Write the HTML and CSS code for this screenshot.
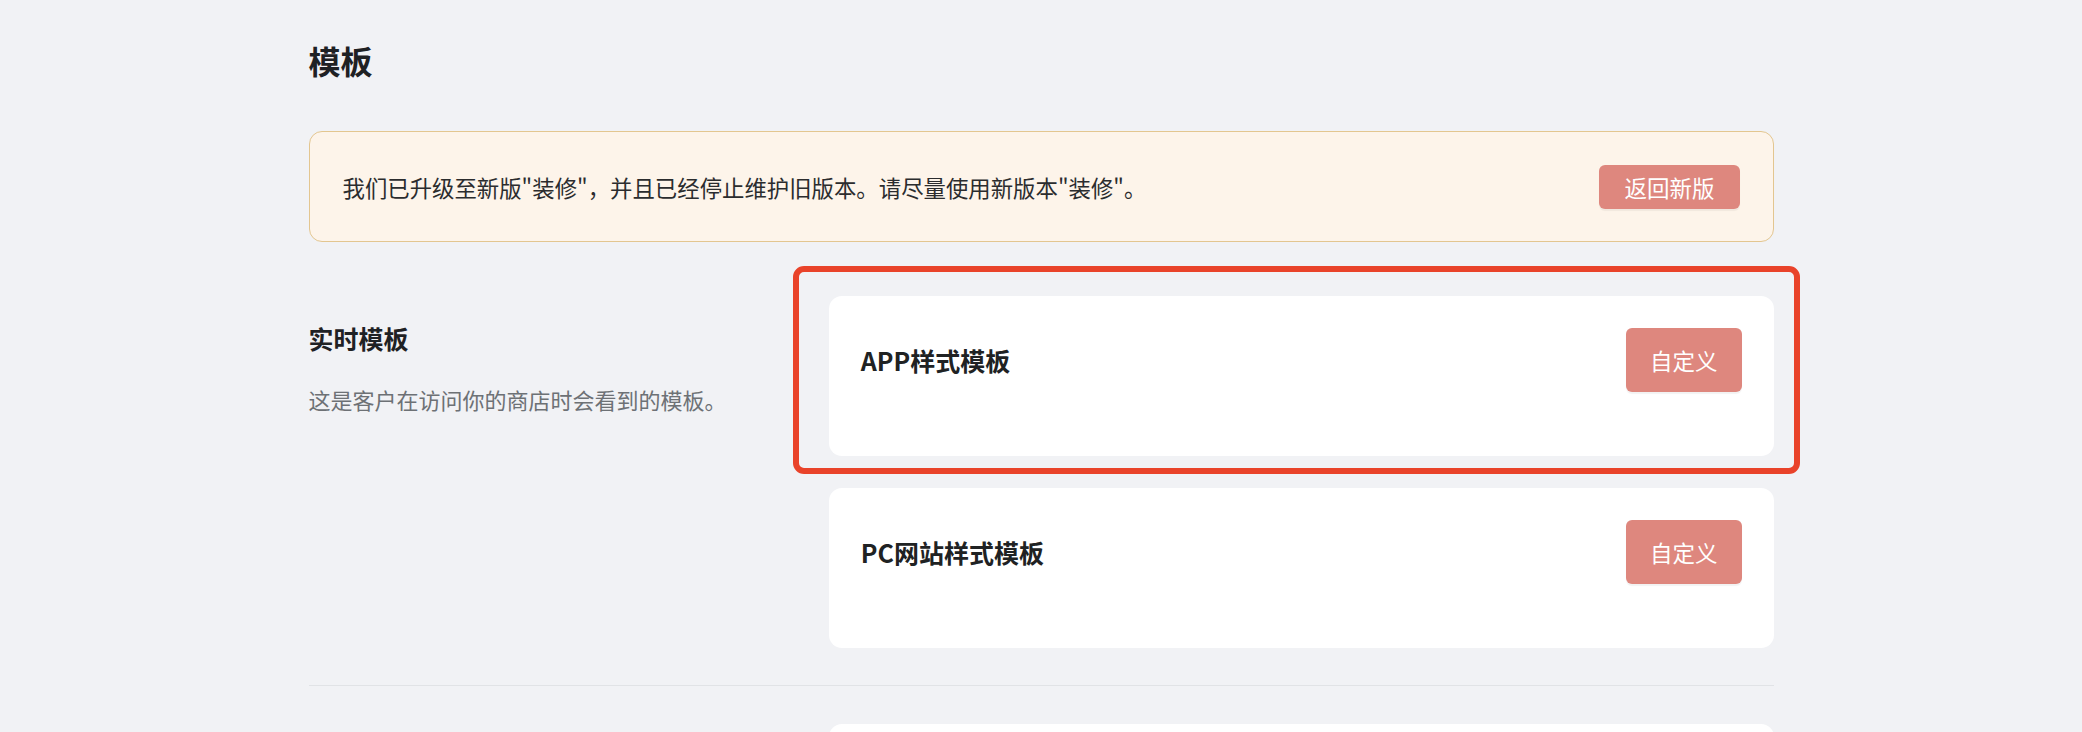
FILE: index.html
```html
<!DOCTYPE html>
<html lang="zh-CN">
<head>
<meta charset="utf-8">
<title>模板</title>
<link rel="stylesheet" href="styles.css">
</head>
<body>
<main class="page">
  <h1 class="page-title">模板</h1>

  <div class="notice">
    <p class="notice-text">我们已升级至新版"装修"，并且已经停止维护旧版本。请尽量使用新版本"装修"。</p>
    <button class="btn" type="button">返回新版</button>
  </div>

  <section class="layout-section">
    <div class="section-info">
      <h2 class="section-title">实时模板</h2>
      <p class="section-desc">这是客户在访问你的商店时会看到的模板。</p>
    </div>
    <div class="section-cards">
      <div class="card-wrap">
        <div class="card">
          <div class="card-header">
            <h3 class="card-title">APP样式模板</h3>
            <button class="btn btn-tall" type="button">自定义</button>
          </div>
        </div>
        <span class="highlight-ring"></span>
      </div>
      <div class="card">
        <div class="card-header">
          <h3 class="card-title">PC网站样式模板</h3>
          <button class="btn btn-tall" type="button">自定义</button>
        </div>
      </div>
    </div>
  </section>

  <section class="layout-section">
    <div class="section-info"></div>
    <div class="section-cards">
      <div class="card card-empty"></div>
    </div>
  </section>
</main>
</body>
</html>
```

FILE: styles.css
```css
* {
  box-sizing: border-box;
}

html, body {
  margin: 0;
  padding: 0;
}

body {
  background: #f1f2f5;
  color: #202223;
  font-family: "Noto Sans CJK SC", "Noto Sans", "Liberation Sans", sans-serif;
  overflow: hidden;
}

.page {
  width: 1465px;
  margin: 0 auto;
  padding-top: 40px;
}

.page-title {
  margin: 0 0 51px;
  font-size: 32px;
  line-height: 40px;
  font-weight: 700;
  color: #1f2124;
}

/* upgrade notice banner */
.notice {
  display: flex;
  align-items: center;
  justify-content: space-between;
  height: 111px;
  padding: 0 33px;
  background: #fdf4ea;
  border: 1px solid #e3c690;
  border-radius: 13px;
}

.notice-text {
  margin: 0;
  font-size: 22.4px;
  line-height: 32px;
  color: #2b2c2e;
}

.btn {
  font-family: inherit;
  font-size: 22.5px;
  line-height: 30px;
  color: #ffffff;
  background: #de877e;
  border: none;
  border-radius: 6px;
  height: 44px;
  padding: 0 25px;
  box-shadow: 0 2px 1px rgba(0, 0, 0, 0.05);
  cursor: pointer;
}

.btn-tall {
  height: 64px;
  padding: 0 24px;
}

/* two-column annotated section */
.layout-section {
  display: grid;
  grid-template-columns: 1fr 2fr;
  column-gap: 48px;
  padding: 54px 0 37px;
}

.layout-section + .layout-section {
  border-top: 1px solid #e1e3e6;
  padding-top: 38px;
}

.section-info {
  padding-top: 26px;
}

.section-title {
  margin: 0;
  font-size: 25px;
  line-height: 32px;
  font-weight: 700;
  color: #1f2124;
}

.section-desc {
  margin: 29px 0 0;
  font-size: 22px;
  line-height: 32px;
  color: #6d7175;
}

.section-cards {
  display: flex;
  flex-direction: column;
  gap: 32px;
}

.card-wrap {
  position: relative;
}

.card {
  background: #ffffff;
  border-radius: 13px;
  padding: 32px 32px 64px;
}

.card-empty {
  min-height: 160px;
}

.card-header {
  display: flex;
  align-items: center;
  justify-content: space-between;
  min-height: 64px;
}

.card-title {
  margin: 0;
  font-size: 25px;
  line-height: 32px;
  font-weight: 700;
  color: #202223;
}

/* red focus ring drawn around the live app template card */
.highlight-ring {
  position: absolute;
  left: -36px;
  top: -30px;
  right: -26px;
  bottom: -18px;
  border: 6px solid #e9432a;
  border-radius: 11px;
  pointer-events: none;
}
```
